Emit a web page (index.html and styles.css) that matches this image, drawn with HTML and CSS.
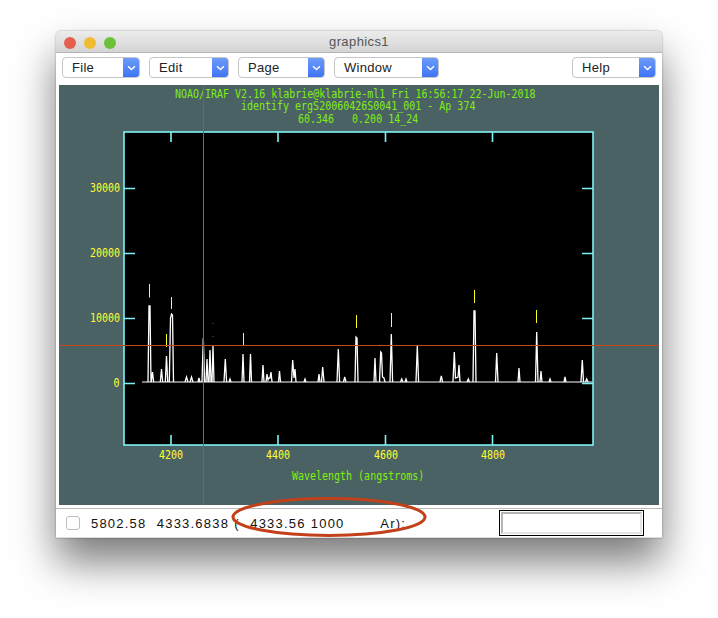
FILE: index.html
```html
<!DOCTYPE html>
<html lang="en">
<head>
<meta charset="utf-8">
<title>graphics1</title>
<link rel="stylesheet" href="styles.css">
</head>
<body>
<div class="window">
  <header class="titlebar">
    <div class="lights"><span class="light red"></span><span class="light yellow"></span><span class="light green"></span></div>
    <div class="title">graphics1</div>
  </header>
  <nav class="toolbar">
    <div class="menu file"><span class="label">File</span><span class="arrow"><svg width="9" height="6" viewBox="0 0 9 6"><path d="M1 1.2 4.5 4.6 8 1.2" class="chev"/></svg></span></div>
    <div class="menu edit"><span class="label">Edit</span><span class="arrow"><svg width="9" height="6" viewBox="0 0 9 6"><path d="M1 1.2 4.5 4.6 8 1.2" class="chev"/></svg></span></div>
    <div class="menu page"><span class="label">Page</span><span class="arrow"><svg width="9" height="6" viewBox="0 0 9 6"><path d="M1 1.2 4.5 4.6 8 1.2" class="chev"/></svg></span></div>
    <div class="menu win"><span class="label">Window</span><span class="arrow"><svg width="9" height="6" viewBox="0 0 9 6"><path d="M1 1.2 4.5 4.6 8 1.2" class="chev"/></svg></span></div>
    <div class="menu help"><span class="label">Help</span><span class="arrow"><svg width="9" height="6" viewBox="0 0 9 6"><path d="M1 1.2 4.5 4.6 8 1.2" class="chev"/></svg></span></div>
  </nav>
  <main class="canvas">
    <svg class="plot" width="600" height="420" viewBox="59 85 600 420">
      <text class="t green" x="175" y="98.5">NOAO/IRAF V2.16 klabrie@klabrie-ml1 Fri 16:56:17 22-Jun-2018</text>
      <text class="t green" x="241" y="111">identify ergS20060426S0041_001 - Ap 374</text>
      <text class="t green" x="298" y="124">60.346   0.200 14_24</text>

      <rect class="frame-bg" x="124" y="132" width="469" height="313"/>
      <path class="baseline" d="M142 382H592"/>
      <path class="spectrum" d="
        M148 382L149 306 150 306 151 382
        M151.3 382L152.5 372 153.7 382
        M160.3 382L161.5 369 162.7 382
        M165.3 382L166.5 356 167.7 382
        M169.3 382L170.5 318 171.5 314 172.5 315 173.5 382
        M185 382L186.5 377 188 382
        M190 382L191.5 377 193 382
        M198 382L199 378 200 382
        M202 382L203.3 338 204.6 382
        M206 382L207 359 208 382
        M209 382L210 350 211 382
        M212 382L213 346 214 382
        M224 382L225.3 359 226.6 382
        M229 382L230 379 231 382
        M242 382L243 354 244 382
        M249.5 382L250.5 354 251.5 382
        M262 382L263 365 264 382
        M266 382L267 374 268 380 269 378 270 378 271 372 272 382
        M278.5 382L279.5 371 280.5 382
        M291.5 382L292.7 360 294 378 295 369 296 382
        M304 382L305 379 306 382
        M318 382L319 374 320 382
        M321.5 382L322.7 367 324 382
        M337 382L338.3 349 339.6 382
        M343.5 382L344.7 377 346 382
        M355 382L356 337 357 338 358 382
        M374 382L375 358 376 382
        M379.5 382L380.7 352 381.5 353 382.5 377 384 378 385 382
        M390 382L391.3 334 392.6 382
        M400.5 382L401.7 379 403 382
        M405 382L406 379 407 382
        M416 382L417.3 346 418.6 382
        M440 382L441.3 376 442.6 382
        M453 382L454.3 352 455.5 378 458 377 459 365 460 382
        M467 382L468.3 379 469.5 382
        M473 382L474 311 475 311 476 382
        M495.5 382L496.7 353 498 382
        M518 382L519 368 520 382
        M535.5 382L536.7 332 538 382
        M540 382L541 371 542 382
        M549 382L550 379 551 382
        M564 382L565 377 566 382
        M581 382L582.3 360 583.5 382
        M585.5 382L586.7 379 588 382"/>
      <path class="marks" d="M149.5 284V297.5M171.5 297V309M166.5 334V347M243.5 333V346M356.5 315V328M391.5 313V327M474.5 290V303M536.5 310V323"/>
      <path class="specks" d="M213 323v1M213 336v1"/>
      <rect class="frame" x="124" y="132" width="469" height="313"/>
      <path class="ticks" d="M124 188.5H135M124 253.5H135M124 318.5H135M124 383.5H135M582 188.5H593M582 253.5H593M582 318.5H593M582 383.5H593M171 132V142M278 132V142M385.5 132V142M492.5 132V142M171 435V445M278 435V445M385.5 435V445M492.5 435V445"/>
      <text class="t yellow" x="90" y="193">30000</text>
      <text class="t yellow" x="90" y="258">20000</text>
      <text class="t yellow" x="90" y="323">10000</text>
      <text class="t yellow" x="113.5" y="388">0</text>
      <text class="t yellow" x="159" y="460">4200</text>
      <text class="t yellow" x="266" y="460">4400</text>
      <text class="t yellow" x="374" y="460">4600</text>
      <text class="t yellow" x="481" y="460">4800</text>
      <text class="t green" x="292" y="481">Wavelength (angstroms)</text>
      <path class="cursor" d="M203.5 85V505M59 345.5H659"/>
    </svg>
  </main>
  <footer class="status">
    <span class="check"></span>
    <span class="readout">5802.58  4333.6838 (  4333.56 1000       Ar):</span>
    <span class="entry"><span class="entry-inner"></span></span>
  </footer>
  <svg class="oval" width="200" height="46" viewBox="0 0 200 46"><ellipse cx="100" cy="23" rx="96" ry="18.5"/></svg>
</div>
</body>
</html>
```
FILE: styles.css
```css
html, body {
  margin: 0;
  padding: 0;
  background: #fff;
  height: 618px;
  overflow: hidden;
}
.window {
  position: relative;
  box-sizing: border-box;
  width: 606px;
  height: 507px;
  margin: 31px 0 0 56px;
  background: #fff;
  border-radius: 5px 5px 0 0;
  box-shadow: 0 24px 42px rgba(0, 0, 0, .52), 0 0 2px rgba(0, 0, 0, .4);
  font-family: "Liberation Sans", Arial, sans-serif;
  display: flex;
  flex-direction: column;
}
.titlebar {
  position: relative;
  box-sizing: border-box;
  height: 22px;
  flex: none;
  border-radius: 5px 5px 0 0;
  border-bottom: 1px solid #b4b4b4;
  background: linear-gradient(#ececec, #d4d4d4);
  display: flex;
  align-items: center;
  justify-content: center;
}
.lights {
  position: absolute;
  left: 8px;
  top: 6px;
  display: flex;
  gap: 8px;
}
.light {
  width: 12px;
  height: 12px;
  border-radius: 50%;
}
.red { background: #e6604f; }
.yellow { background: #f1bc32; }
.green { background: #6cc13b; }
.title {
  font-size: 13px;
  letter-spacing: .4px;
  color: #555;
}
.toolbar {
  box-sizing: border-box;
  height: 32px;
  flex: none;
  display: flex;
  gap: 9px;
  padding: 4px 6px 0;
  background: #fff;
}
.menu {
  box-sizing: border-box;
  height: 21px;
  display: flex;
  justify-content: space-between;
  border: 1px solid #c6c6c6;
  border-radius: 4px;
  background: #fff;
  overflow: hidden;
}
.file { width: 78px; }
.edit { width: 80px; }
.page { width: 87px; }
.win { width: 105px; }
.help { width: 84px; margin-left: auto; }
.label {
  padding-left: 9px;
  font-size: 13px;
  line-height: 19px;
  letter-spacing: .3px;
  color: #222;
}
.arrow {
  width: 17px;
  margin: -1px -1px -1px 0;
  display: flex;
  align-items: center;
  justify-content: center;
  background: linear-gradient(#6d9dfb, #3e72f4);
}
.chev {
  fill: none;
  stroke: #fff;
  stroke-width: 1.4;
}
.canvas {
  height: 420px;
  flex: none;
  margin: 0 3px;
  background: #4b6264;
}
.plot {
  display: block;
}
.t {
  font-family: "DejaVu Sans Mono", monospace;
  font-size: 10px;
  white-space: pre;
  transform-box: fill-box;
  transform-origin: 0 100%;
  transform: scaleY(1.3);
}
.t.green { fill: #7fee14; }
.t.yellow { fill: #ffff33; }
.frame-bg { fill: #000; }
.frame, .ticks {
  fill: none;
  stroke: #7df3f5;
  stroke-width: 1.6;
}
.baseline {
  fill: none;
  stroke: #fff;
  stroke-width: 1.2;
}
.spectrum {
  fill: none;
  stroke: #fff;
  stroke-width: 1.3;
  stroke-linejoin: miter;
}
.marks {
  fill: none;
  stroke: #ffff20;
  stroke-width: 1;
}
.specks {
  fill: none;
  stroke: #666;
  stroke-width: 1;
}
.cursor {
  fill: none;
  stroke: #c8481e;
  stroke-width: 1;
}
.status {
  box-sizing: border-box;
  flex: 1;
  margin-top: 3px;
  display: flex;
  align-items: center;
  padding: 0 18px 0 10px;
  border-top: 1px solid #b9b9b9;
  border-bottom: 1px solid #dcdcdc;
}
.check {
  box-sizing: border-box;
  flex: none;
  width: 14px;
  height: 14px;
  border: 1px solid #bdbdbd;
  border-radius: 3px;
  background: #fff;
}
.readout {
  margin-left: 11px;
  flex: 1;
  font-size: 13px;
  letter-spacing: 1.2px;
  word-spacing: .4px;
  white-space: pre;
  color: #111;
}
.entry {
  box-sizing: border-box;
  flex: none;
  width: 145px;
  height: 26px;
  padding: 1px;
  border: 1px solid #000;
  display: flex;
  background: #fff;
}
.entry-inner {
  flex: 1;
  border-style: solid;
  border-width: 2px;
  border-color: #b4b4b4 #e4e4e4 #e4e4e4 #b4b4b4;
}
.oval {
  position: absolute;
  left: 173px;
  top: 463px;
  overflow: visible;
}
.oval ellipse {
  fill: none;
  stroke: #c2401a;
  stroke-width: 3;
}
```
